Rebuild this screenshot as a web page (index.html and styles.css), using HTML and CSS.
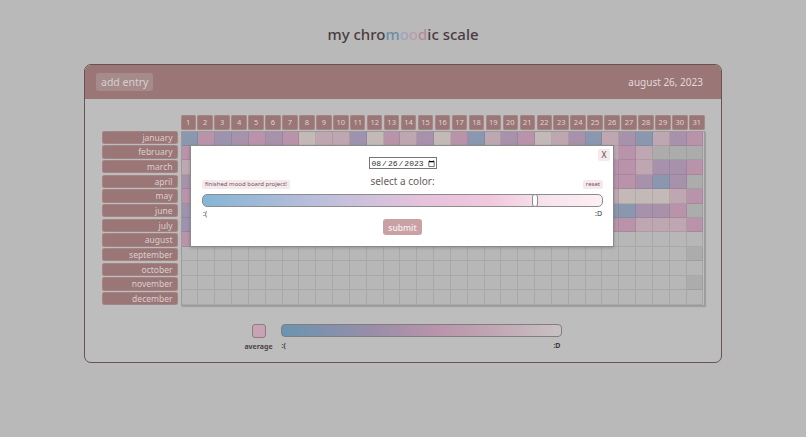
FILE: index.html
```html
<!DOCTYPE html>
<html>
<head>
<meta charset="utf-8">
<title>my chromoodic scale</title>
<link rel="stylesheet" href="styles.css">
</head>
<body>
<h1 class="title">my chro<span class="t1">m</span><span class="t2">o</span><span class="t3">o</span><span class="t4">d</span>ic scale</h1>
<main class="card">
  <header class="card-head">
    <button class="btn-add">add entry</button>
    <span class="today">august 26, 2023</span>
  </header>
  <section class="card-body">
    <div class="days" id="days"></div>
    <div class="chart">
      <div class="months" id="months"></div>
      <div class="cells" id="cells"></div>
    </div>
    <div class="legend">
      <div class="avg">
        <div class="swatch"></div>
        <div class="avg-label">average</div>
      </div>
      <div class="scale">
        <div class="bar"></div>
        <div class="scale-labels"><span>:(</span><span>:D</span></div>
      </div>
    </div>
  </section>
</main>
<div class="modal">
  <button class="close">X</button>
  <div class="date-row"><input class="date" type="date" value="2023-08-26"></div>
  <div class="picker-row">
    <span class="chip tag">finished mood board project!</span>
    <span class="select">select a color:</span>
    <span class="chip reset">reset</span>
  </div>
  <div class="track"><div class="thumb"></div></div>
  <div class="ends"><span>:(</span><span>:D</span></div>
  <button class="submit">submit</button>
</div>
<script src="app.js"></script>
</body>
</html>
```
FILE: styles.css
```css
* { box-sizing: border-box; }
body {
  margin: 0;
  height: 437px;
  overflow: hidden;
  position: relative;
  background: #b9b9b9;
  font-family: "Noto Sans", sans-serif;
}
.title {
  margin: 0;
  height: 64px;
  padding-top: 23px;
  text-align: center;
  font-size: 15px;
  font-weight: 500;
  line-height: 22px;
  color: #4b3b41;
}
.t1 { color: #6d8ca3; }
.t2 { color: #a3a3bb; }
.t3 { color: #bb9daa; }
.t4 { color: #b18b9a; }

.card {
  width: 638px;
  height: 299px;
  margin: 0 auto;
  border: 1.5px solid #6a5252;
  border-radius: 7px;
  background: #bdbdbd;
  overflow: hidden;
}
.card-head {
  height: 34px;
  background: #9a7676;
  display: flex;
  align-items: center;
  justify-content: space-between;
  padding: 0 18px 0 11px;
}
.btn-add {
  height: 18px;
  padding: 0 5px;
  border: none;
  border-radius: 3px;
  background: #a68b8b;
  color: #d9cece;
  font-family: inherit;
  font-size: 10.5px;
  line-height: 18px;
}
.today {
  color: #e2dada;
  font-size: 10px;
}
.card-body {
  padding: 15.5px 16.5px 0;
}
.days {
  display: flex;
  gap: 1.5px;
  margin-left: 79px;
  height: 15px;
  margin-bottom: 1px;
}
.day {
  flex: 1;
  background: #9a7676;
  border-radius: 2px;
  box-shadow: inset 0 0 0 0.6px #ad9494;
  color: #dfd4d4;
  font-size: 7.5px;
  line-height: 15px;
  text-align: center;
}
.chart {
  display: flex;
  gap: 3px;
  height: 175px;
}
.months {
  width: 76px;
  display: flex;
  flex-direction: column;
  justify-content: space-between;
}
.month {
  height: 13.6px;
  background: #9a7676;
  border-radius: 3px;
  box-shadow: inset 0 0 0 0.6px #ab9191;
  color: #dacfcf;
  font-size: 8.5px;
  line-height: 13.6px;
  text-align: right;
  padding-right: 5px;
}
.cells {
  flex: 1;
  display: grid;
  grid-template-columns: repeat(31, 1fr);
  grid-template-rows: repeat(12, 1fr);
  border: 1px solid #9c9c9c;
  box-shadow: 1px 1px 1px rgba(0,0,0,.15);
}
.cell {
  border-right: 1px solid rgba(0,0,0,.08);
  border-bottom: 1px solid rgba(0,0,0,.08);
}
.c-B { background: #8a97ae; }
.c-U { background: #9d93ae; }
.c-P { background: #a891ab; }
.c-K { background: #b893a9; }
.c-L { background: #bfa7b2; }
.c-E { background: #c3b9b6; }
.c-G { background: #b7b7b7; }
.c-D { background: #acacac; }

.legend {
  display: flex;
  justify-content: center;
  gap: 8px;
  margin-top: 18px;
}
.avg {
  width: 28px;
  display: flex;
  flex-direction: column;
  align-items: center;
}
.swatch {
  width: 14px;
  height: 14px;
  background: #c7a3b3;
  border: 1px solid #8f7b81;
  border-radius: 3px;
}
.avg-label {
  margin-top: 4px;
  font-size: 7px;
  font-weight: 700;
  color: #4f4448;
  line-height: 9px;
}
.scale { width: 281px; }
.bar {
  height: 13px;
  border: 1px solid #857a7e;
  border-radius: 4px;
  background: linear-gradient(to right, #6a94b0, #9a8ea9 33%, #b894aa 55%, #c0a6b3 75%, #c8c2c3);
}
.scale-labels {
  display: flex;
  justify-content: space-between;
  padding: 0 1px;
  margin-top: 4px;
  font-size: 7px;
  font-weight: 700;
  line-height: 9px;
  color: #3e3438;
}

.modal {
  position: absolute;
  left: 190px;
  top: 145px;
  width: 424px;
  height: 102px;
  background: #fff;
  border: 1px solid #8a8a8a;
  box-shadow: 0 1px 3px rgba(0,0,0,.2);
  padding: 11px 10px 0 11px;
}
.close {
  position: absolute;
  top: 3px;
  right: 3px;
  width: 12px;
  height: 12px;
  padding: 0;
  border: none;
  border-radius: 2px;
  background: #f6e9eb;
  color: #5a4a4e;
  font-family: inherit;
  font-size: 8.5px;
  line-height: 12px;
}
.date-row {
  height: 12px;
  display: flex;
  justify-content: center;
}
.date {
  width: 68px;
  height: 12px;
  padding: 0 1px;
  margin: 0;
  border: 1px solid #767676;
  border-radius: 0;
  font-family: "Liberation Mono", monospace;
  font-size: 8px;
  color: #333;
  background: #fff;
}
.date::-webkit-datetime-edit { padding: 0; }
.date::-webkit-datetime-edit-fields-wrapper { padding: 0; }
.date::-webkit-calendar-picker-indicator {
  width: 7px;
  height: 7px;
  padding: 0;
  margin: 0 0 0 1px;
}
.picker-row {
  display: grid;
  grid-template-columns: 1fr auto 1fr;
  align-items: end;
  margin-top: 6px;
}
.chip {
  background: #f6e8eb;
  color: #6a5a5e;
  font-size: 6px;
  line-height: 9px;
  padding: 0 3px;
  border-radius: 2px;
}
.tag { justify-self: start; }
.reset { justify-self: end; }
.select {
  font-size: 10px;
  line-height: 13px;
  color: #6b5b5f;
  padding-bottom: 1px;
}
.track {
  position: relative;
  height: 13px;
  margin-top: 5px;
  border: 1px solid #8c8c8c;
  border-radius: 5px;
  background: linear-gradient(to right, #86b5d6, #c6c0dc 35%, #e6c2dc 55%, #f1c8de 72%, #f8e3ec 86%, #fcf0f4);
}
.thumb {
  position: absolute;
  left: 329px;
  top: -1px;
  width: 6px;
  height: 13px;
  background: #fff;
  border: 1px solid #8c8c8c;
  border-radius: 3px;
}
.ends {
  display: flex;
  justify-content: space-between;
  padding: 0 1px;
  margin-top: 3px;
  height: 8px;
  font-size: 7px;
  line-height: 8px;
  color: #333;
}
.submit {
  display: block;
  margin: 1px auto 0;
  width: 39px;
  height: 16px;
  padding: 0;
  border: none;
  border-radius: 3px;
  background: #c9a1a5;
  color: #f7efef;
  font-family: inherit;
  font-size: 8.5px;
  font-weight: 500;
}
```
FILE: app.js
```js
const months = ['january','february','march','april','may','june','july','august','september','october','november','december'];
const data = [
  'BKUPKPKELLUEKLPEKBLPKELPBLPBLPK',
  'KLPEKUBLKPELKPUEKLBPKLEPKLKLDDD',
  'LKPBLEKPLUKEPKLBPEKLPUKLEKKLPPK',
  'PLKEBPKLUEKPLBKEPLKUPLEKBKKPBPD',
  'KEPLKBUKLEPKLEBKPLUKEPLKBLEEELK',
  'UKLEPBKLPKEUPLKBEKLPKUELPBBPPKD',
  'ULKPELBKUPLEKPBLKEPLKBEPLKKLLLK',
  'KPLEKBLPKUELKPBKELPKLUPEKGGGGGG',
  'GGGGGGGGGGGGGGGGGGGGGGGGGGGGGGD',
  'GGGGGGGGGGGGGGGGGGGGGGGGGGGGGGG',
  'GGGGGGGGGGGGGGGGGGGGGGGGGGGGGGD',
  'GGGGGGGGGGGGGGGGGGGGGGGGGGGGGGG'
];
const days = document.getElementById('days');
for (let d = 1; d <= 31; d++) {
  const el = document.createElement('div');
  el.className = 'day';
  el.textContent = d;
  days.appendChild(el);
}
const monthsEl = document.getElementById('months');
months.forEach(m => {
  const el = document.createElement('div');
  el.className = 'month';
  el.textContent = m;
  monthsEl.appendChild(el);
});
const cells = document.getElementById('cells');
data.forEach(row => {
  for (const ch of row) {
    const el = document.createElement('div');
    el.className = 'cell c-' + ch;
    cells.appendChild(el);
  }
});
```
